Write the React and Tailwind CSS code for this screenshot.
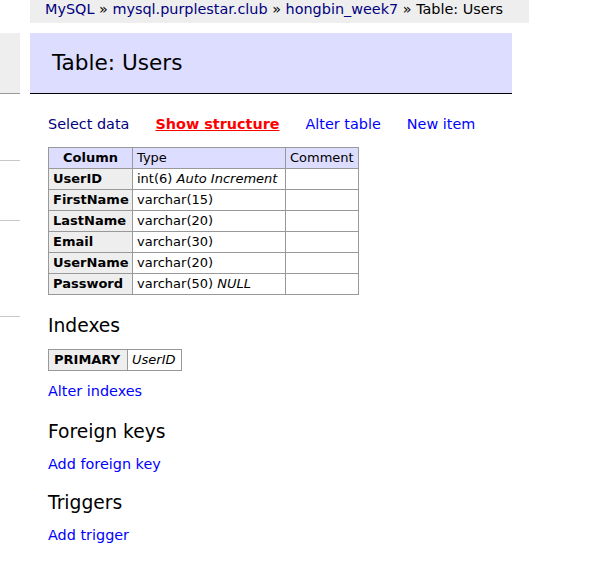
export default function App() {
  const rows = [
    ["UserID", "int(6)", "Auto Increment"],
    ["FirstName", "varchar(15)", ""],
    ["LastName", "varchar(20)", ""],
    ["Email", "varchar(30)", ""],
    ["UserName", "varchar(20)", ""],
    ["Password", "varchar(50)", "NULL"],
  ];
  return (
    <div className="w-[604px] h-[561px] bg-white overflow-hidden flex text-[14.4px] leading-[18px] text-black font-['DejaVu_Sans',Verdana,sans-serif]">
      {/* left menu remnants */}
      <div className="w-[20px] shrink-0 flex flex-col">
        <div className="mt-[33px] h-[61px] bg-[#eeeeee] border-b border-[#999]" />
        <div className="mt-[66px] h-px bg-[#c8c8c8]" />
        <div className="mt-[59px] h-px bg-[#c8c8c8]" />
        <div className="mt-[95px] h-px bg-[#c8c8c8]" />
      </div>
      {/* main */}
      <div className="ml-[10px] w-[499px] flex flex-col">
        <div className="h-[23px] bg-[#eeeeee] pl-[15px] whitespace-nowrap">
          <span className="text-[#000080]">MySQL</span> » <span className="text-[#000080]">mysql.purplestar.club</span> » <span className="text-[#000080]">hongbin_week7</span> » Table: Users
        </div>
        <div className="mt-[10px] w-[482px] h-[61px] bg-[#ddddff] border-b border-black pl-[22px] flex items-center text-[21.6px] leading-[26px]">
          Table: Users
        </div>
        <div className="pl-[18px] flex flex-col">
          <div className="mt-[21px] flex gap-[26px] whitespace-nowrap">
            <span className="text-[#000080]">Select data</span>
            <span className="text-[#ff0000] font-bold underline">Show structure</span>
            <span className="text-[#0000ff]">Alter table</span>
            <span className="text-[#0000ff]">New item</span>
          </div>
          <table className="mt-[14px] border-collapse border border-[#999] table-fixed w-[310px] text-[13px] leading-[16px]">
            <thead>
              <tr className="bg-[#ddddff]">
                <th className="w-[84px] border border-[#999] px-[4px] py-[2px] font-bold text-center">Column</th>
                <td className="w-[153px] border border-[#999] px-[4px] py-[2px]">Type</td>
                <td className="w-[73px] border border-[#999] px-[4px] py-[2px]">Comment</td>
              </tr>
            </thead>
            <tbody>
              {rows.map(([n, t, x]) => (
                <tr key={n}>
                  <th className="bg-[#eeeeee] border border-[#999] px-[4px] py-[2px] font-bold text-left whitespace-nowrap">{n}</th>
                  <td className="border border-[#999] px-[4px] py-[2px] whitespace-nowrap">
                    {t}{x && <> <i>{x}</i></>}
                  </td>
                  <td className="border border-[#999] px-[4px] py-[2px]"></td>
                </tr>
              ))}
            </tbody>
          </table>
          <div className="mt-[20px] text-[18.7px] leading-[22px]">Indexes</div>
          <table className="mt-[12px] border-collapse border border-[#999] table-fixed w-[133px] text-[13px] leading-[16px]">
            <tbody>
              <tr>
                <th className="w-[79px] bg-[#eeeeee] border border-[#999] px-[5px] py-[2px] font-bold text-left whitespace-nowrap">PRIMARY</th>
                <td className="w-[54px] border border-[#999] px-[4px] py-[2px] whitespace-nowrap"><i>UserID</i></td>
              </tr>
            </tbody>
          </table>
          <div className="mt-[11px] text-[#0000ff]">Alter indexes</div>
          <div className="mt-[21px] text-[18.7px] leading-[22px]">Foreign keys</div>
          <div className="mt-[12px] text-[#0000ff]">Add foreign key</div>
          <div className="mt-[19px] text-[18.7px] leading-[22px]">Triggers</div>
          <div className="mt-[12px] text-[#0000ff]">Add trigger</div>
        </div>
      </div>
    </div>
  );
}
